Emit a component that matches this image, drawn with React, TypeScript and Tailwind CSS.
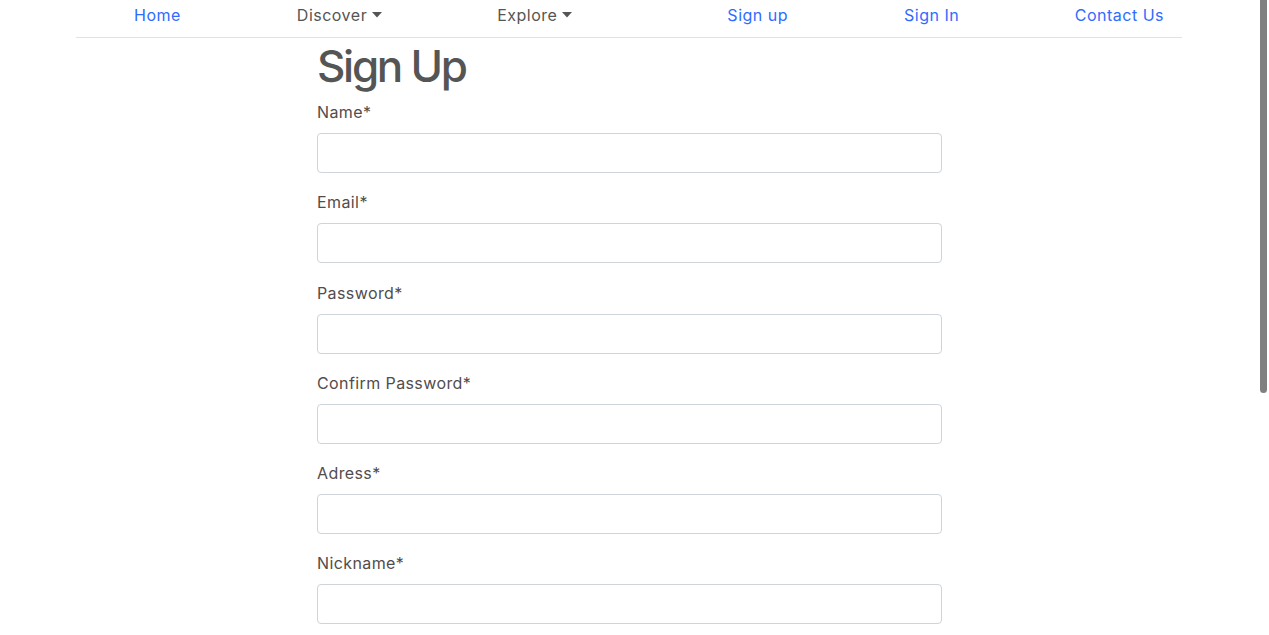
import React from 'react';

const fields = ['Name', 'Email', 'Password', 'Confirm Password', 'Adress', 'Nickname'];

function Caret() {
  return (
    <svg className="ml-[5px] inline-block w-[10px] h-[6px]" viewBox="0 0 10 6" fill="currentColor">
      <path d="M0 0h10L5 5.5z" />
    </svg>
  );
}

export default function App() {
  return (
    <div
      className="h-screen overflow-hidden bg-white flex"
      style={{ fontFamily: 'Inter, "Liberation Sans", sans-serif' }}
    >
      <div className="w-[1258px] shrink-0">
        {/* Navbar */}
        <nav className="mx-auto w-[1106px] border-b border-[#dee2e6] pt-[3px] pb-[10px] flex items-center text-[16px] leading-6 tracking-[0.5px]">
          <a href="#" className="ml-[58px] text-[#2f6bff]">Home</a>
          <a href="#" className="ml-[116px] text-[#555] flex items-center">
            Discover<Caret />
          </a>
          <a href="#" className="ml-[115px] text-[#555] flex items-center">
            Explore<Caret />
          </a>
          <a href="#" className="ml-[155px] text-[#2f6bff]">Sign up</a>
          <a href="#" className="ml-[116px] text-[#2f6bff]">Sign In</a>
          <a href="#" className="ml-auto mr-[18px] text-[#2f6bff]">Contact Us</a>
        </nav>

        {/* Form */}
        <main className="ml-[317px] w-[625px]">
          <h1 className="mt-px mb-[7px] text-[44px] leading-[54px] font-medium text-[#555] tracking-[-2.3px]">
            Sign Up
          </h1>
          <form>
            {fields.map((f) => (
              <div key={f} className="mb-[17.3px]">
                <label className="block mb-[9px] text-[16px] leading-6 tracking-[0.4px] text-[#524c4c]">{f}*</label>
                <input
                  type="text"
                  className="block w-full h-[40px] rounded-[4px] border border-[#ced4da] bg-white px-3"
                />
              </div>
            ))}
          </form>
        </main>
      </div>

      {/* overlay scrollbar */}
      <div className="flex-1 pl-[2px]">
        <div className="w-[7px] h-[393px] bg-[#808080] rounded-b-[4px]" />
      </div>
    </div>
  );
}
